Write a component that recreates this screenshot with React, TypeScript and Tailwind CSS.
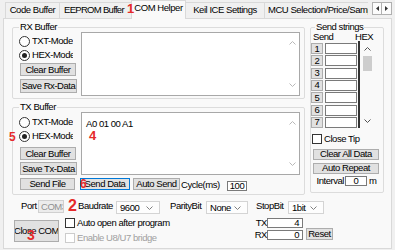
import React from "react"

const PANEL = "bg-[#f9f9f9]"

function Chevron({ up, color = "#b8b8b8" }: { up?: boolean; color?: string }) {
  return (
    <svg width="7" height="4" viewBox="0 0 7 4" className="block">
      <path d={up ? "M0.5 3.5L3.5 0.5L6.5 3.5" : "M0.5 0.5L3.5 3.5L6.5 0.5"} stroke={color} fill="none" strokeWidth="1" />
    </svg>
  )
}

function Btn({ className = "", children }: { className?: string; children: React.ReactNode }) {
  return (
    <div className={`flex items-center justify-center overflow-hidden whitespace-nowrap bg-[#e1e1e1] border border-[#adadad] ${className}`}>
      {children}
    </div>
  )
}

function Radio({ label, checked }: { label: string; checked?: boolean }) {
  return (
    <div className="flex items-center h-[14px]">
      <span className="w-[11px] h-[11px] shrink-0 rounded-full border border-[#333333] bg-white flex items-center justify-center">
        {checked && <span className="w-[5px] h-[5px] rounded-full bg-[#222222]" />}
      </span>
      <span className="ml-[2px] w-[41px] overflow-hidden whitespace-nowrap">{label}</span>
    </div>
  )
}

function Box({ disabled }: { disabled?: boolean }) {
  return (
    <span className={`w-[10px] h-[10px] shrink-0 bg-white border ${disabled ? "border-[#cccccc]" : "border-[#333333]"}`} />
  )
}

function TextArea({ className = "", children }: { className?: string; children?: React.ReactNode }) {
  return (
    <div className={`flex bg-white border border-[#a8a8a8] ${className}`}>
      <div className="flex-1 pl-[4px] pt-[6px] whitespace-nowrap">{children}</div>
      <div className="w-[13px] flex flex-col items-center justify-between py-[8px]">
        <Chevron up />
        <Chevron />
      </div>
    </div>
  )
}

function Combo({ value, className = "" }: { value: string; className?: string }) {
  return (
    <div className={`flex items-center justify-between h-[13px] bg-[#fdfdfd] border border-[#d4d4d4] pl-[3px] pr-[6px] ${className}`}>
      <span>{value}</span>
      <Chevron color="#808080" />
    </div>
  )
}

function GroupLabel({ className = "", children }: { className?: string; children: React.ReactNode }) {
  return <span className={`absolute top-[-6px] px-[1px] ${PANEL} whitespace-nowrap ${className}`}>{children}</span>
}

export default function App() {
  const rows = [1, 2, 3, 4, 5, 6, 7]
  return (
    <div className="w-[395px] h-[250px] bg-[#f0f0f0] overflow-hidden relative font-['Liberation_Sans',Arial,sans-serif] text-[9.5px] leading-[10px] tracking-[-0.45px] text-black">
      {/* tabs */}
      <div className="flex items-end h-[18px] pl-[5px] relative z-10">
        <div className="w-[54px] h-[16px] flex items-center justify-center pb-[2px] border-l border-t border-[#d9d9d9] bg-[#f0f0f0] whitespace-nowrap overflow-hidden">
          Code Buffer
        </div>
        <div className="w-[72px] h-[16px] flex items-center pl-[4px] pb-[2px] border-l border-t border-[#d9d9d9] bg-[#f0f0f0] whitespace-nowrap overflow-hidden tracking-[-0.7px]">
          EEPROM Buffer
        </div>
        <div className={`w-[55px] h-[19px] mb-[-1px] flex justify-center pt-[2px] border-l border-r border-t border-[#d9d9d9] ${PANEL} whitespace-nowrap overflow-hidden`}>
          COM Helper
        </div>
        <div className="w-[78px] h-[16px] flex items-center justify-center pb-[2px] border-t border-[#d9d9d9] bg-[#f0f0f0] whitespace-nowrap overflow-hidden">
          Keil ICE Settings
        </div>
        <div className="w-[104px] h-[16px] flex items-center pl-[3px] pb-[2px] border-l border-t border-[#d9d9d9] bg-[#f0f0f0] whitespace-nowrap overflow-hidden">
          MCU Selection/Price/Sample
        </div>
        <div className="self-start mt-[2px] ml-[4px] flex">
          <div className="w-[10px] h-[13px] bg-[#fbfbfb] border border-[#b0b0b0] flex items-center justify-center">
            <svg width="3" height="5" viewBox="0 0 3 5"><path d="M3 0L0 2.5L3 5Z" fill="#333" /></svg>
          </div>
          <div className="w-[10px] h-[13px] bg-[#fbfbfb] border border-l-0 border-[#b0b0b0] flex items-center justify-center">
            <svg width="3" height="5" viewBox="0 0 3 5"><path d="M0 0L3 2.5L0 5Z" fill="#333" /></svg>
          </div>
        </div>
      </div>

      {/* panel */}
      <div className={`ml-[3px] w-[389px] h-[231px] border border-[#d9d9d9] ${PANEL} flex flex-col`}>
        <div className="flex">
          <div className="ml-[8px] w-[293px] flex flex-col">
            {/* RX */}
            <div className="relative mt-[8px] h-[72px] border border-[#dcdcdc] rounded-[2px]">
              <GroupLabel className="left-[6px]">RX Buffer</GroupLabel>
              <div className="flex pl-[6px] pt-[4px]">
                <div className="w-[62px] pt-[2px] flex flex-col">
                  <Radio label="TXT-Mode" />
                  <Radio label="HEX-Mode" checked />
                  <Btn className="mt-[1px] ml-[1px] w-[56px] h-[13px]">Clear Buffer</Btn>
                  <Btn className="mt-[3px] ml-[1px] w-[57px] h-[14px]">Save Rx-Data</Btn>
                </div>
                <TextArea className="w-[219px] h-[64px]" />
              </div>
            </div>
            {/* TX */}
            <div className="relative mt-[8px] h-[88px] border border-[#dcdcdc] rounded-[2px]">
              <GroupLabel className="left-[6px]">TX Buffer</GroupLabel>
              <div className="flex pl-[6px] pt-[4px]">
                <div className="w-[62px] pt-[3px] flex flex-col">
                  <Radio label="TXT-Mode" />
                  <Radio label="HEX-Mode" checked />
                  <Btn className="mt-[4px] ml-[1px] w-[56px] h-[13px]">Clear Buffer</Btn>
                  <Btn className="mt-[2px] ml-[1px] w-[57px] h-[13px]">Save Tx-Data</Btn>
                </div>
                <TextArea className="w-[219px] h-[63px]">A0 01 00 A1</TextArea>
              </div>
              <div className="flex items-start mt-[3px] pl-[7px]">
                <Btn className="w-[55px] h-[12px]">Send File</Btn>
                <Btn className="ml-[5px] w-[50px] h-[12px] !border-[#0078d7]">Send Data</Btn>
                <Btn className="ml-[3px] w-[47px] h-[12px]">Auto Send</Btn>
                <span className="ml-[1px] w-[46px] mt-[2px] whitespace-nowrap">Cycle(ms)</span>
                <div className="w-[20px] h-[10px] mt-[3px] bg-white border border-[#7a7a7a] flex items-center justify-center">100</div>
              </div>
            </div>
          </div>

          {/* Send strings */}
          <div className="relative ml-[5px] mt-[8px] w-[74px] h-[166px] border border-[#dcdcdc] rounded-[2px] flex flex-col">
            <GroupLabel className="left-[4px]">Send strings</GroupLabel>
            <div className="flex mt-[4px] h-[10px]">
              <span className="ml-[2px] w-[42px]">Send</span>
              <span>HEX</span>
            </div>
            <div className="flex mt-[1px]">
              <div className="flex flex-col gap-[1.33px]">
                {rows.map((n) => (
                  <div key={n} className="flex items-start h-[11px]">
                    <Btn className="w-[12px] h-[11px]">{n}</Btn>
                    <span className="ml-[2px] w-[32px] h-[11px] bg-white border border-[#7a7a7a]" />
                    <span className="ml-[1px]"><Box /></span>
                  </div>
                ))}
              </div>
              <div className="ml-[2px] w-[10px] flex flex-col items-center">
                <div className="mt-[4px]"><Chevron up color="#505050" /></div>
                <div className="mt-[5px] w-[9px] h-[15px] bg-[#cdcdcd]" />
                <div className="mt-auto mb-[5px]"><Chevron color="#505050" /></div>
              </div>
            </div>
            <div className="flex items-center h-[10px] mt-[6px] ml-[1px]">
              <Box />
              <span className="ml-[2px] whitespace-nowrap">Close Tip</span>
            </div>
            <Btn className="mt-[5px] ml-[2px] w-[66px] h-[11px]">Clear All Data</Btn>
            <Btn className="mt-[3px] ml-[2px] w-[66px] h-[11px]">Auto Repeat</Btn>
            <div className="flex items-center h-[10px] mt-[2px]">
              <span className="w-[33px] text-right">Interval</span>
              <div className="ml-[1px] w-[22px] h-[10px] bg-white border border-[#7a7a7a] flex items-center justify-center">0</div>
              <span className="ml-[2px]">m</span>
            </div>
          </div>
        </div>

        {/* bottom rows */}
        <div className="flex items-start mt-[5px] h-[14px] pl-[17px]">
          <span className="w-[17px] mt-[1px]">Port</span>
          <div className="w-[26px] h-[13px] bg-[#ececec] border border-[#d0d0d0] text-[#909090] pl-[2px] flex items-center overflow-hidden whitespace-nowrap">COM3</div>
          <span className="ml-[14px] w-[38px] mt-[1px] whitespace-nowrap">Baudrate</span>
          <Combo value="9600" className="mt-[1px] w-[44px]" />
          <span className="ml-[10px] w-[36px] mt-[1px] whitespace-nowrap">ParityBit</span>
          <Combo value="None" className="mt-[1px] w-[42px]" />
          <span className="ml-[8px] w-[32px] mt-[1px] whitespace-nowrap">StopBit</span>
          <Combo value="1bit" className="mt-[1px] w-[36px]" />
        </div>
        <div className="flex items-start mt-[4px] pl-[10px]">
          <Btn className="mt-[2px] w-[45px] h-[22px]">Close COM</Btn>
          <div className="ml-[6px] w-[180px] flex flex-col">
            <div className="flex items-center h-[10px]">
              <Box />
              <span className="ml-[2px] whitespace-nowrap">Auto open after program</span>
            </div>
            <div className="flex items-center h-[10px] mt-[5px] text-[#a0a0a0]">
              <Box disabled />
              <span className="ml-[2px] whitespace-nowrap">Enable U8/U7 bridge</span>
            </div>
          </div>
          <div className="w-[58px] flex flex-col">
            <div className="flex items-center h-[10px]">
              <span className="w-[22px] text-right">TX</span>
              <div className="w-[36px] h-[10px] bg-white border border-[#7a7a7a] flex items-center justify-end pr-[3px]">4</div>
            </div>
            <div className="flex items-center h-[10px] mt-[2px]">
              <span className="w-[22px] text-right">RX</span>
              <div className="w-[36px] h-[10px] bg-white border border-[#7a7a7a] flex items-center justify-end pr-[3px]">0</div>
            </div>
          </div>
          <Btn className="ml-[3px] mt-[10px] w-[27px] h-[12px]">Reset</Btn>
        </div>
      </div>

      {/* red annotation numbers */}
      <span className="absolute z-20 left-[127px] top-[2px] text-[13px] leading-[13px] font-bold text-[#e52a2a] tracking-normal">1</span>
      <span className="absolute z-20 left-[68px] top-[198px] text-[16px] leading-[16px] font-bold text-[#e52a2a] tracking-normal">2</span>
      <span className="absolute z-20 left-[27px] top-[228px] text-[14px] leading-[14px] font-bold text-[#e52a2a] tracking-normal">3</span>
      <span className="absolute z-20 left-[89px] top-[129px] text-[13px] leading-[13px] font-bold text-[#e52a2a] tracking-normal">4</span>
      <span className="absolute z-20 left-[9px] top-[131px] text-[12px] leading-[12px] font-bold text-[#e52a2a] tracking-normal">5</span>
      <span className="absolute z-20 left-[80px] top-[178px] text-[12px] leading-[12px] font-bold text-[#e52a2a] tracking-normal">6</span>
    </div>
  )
}
